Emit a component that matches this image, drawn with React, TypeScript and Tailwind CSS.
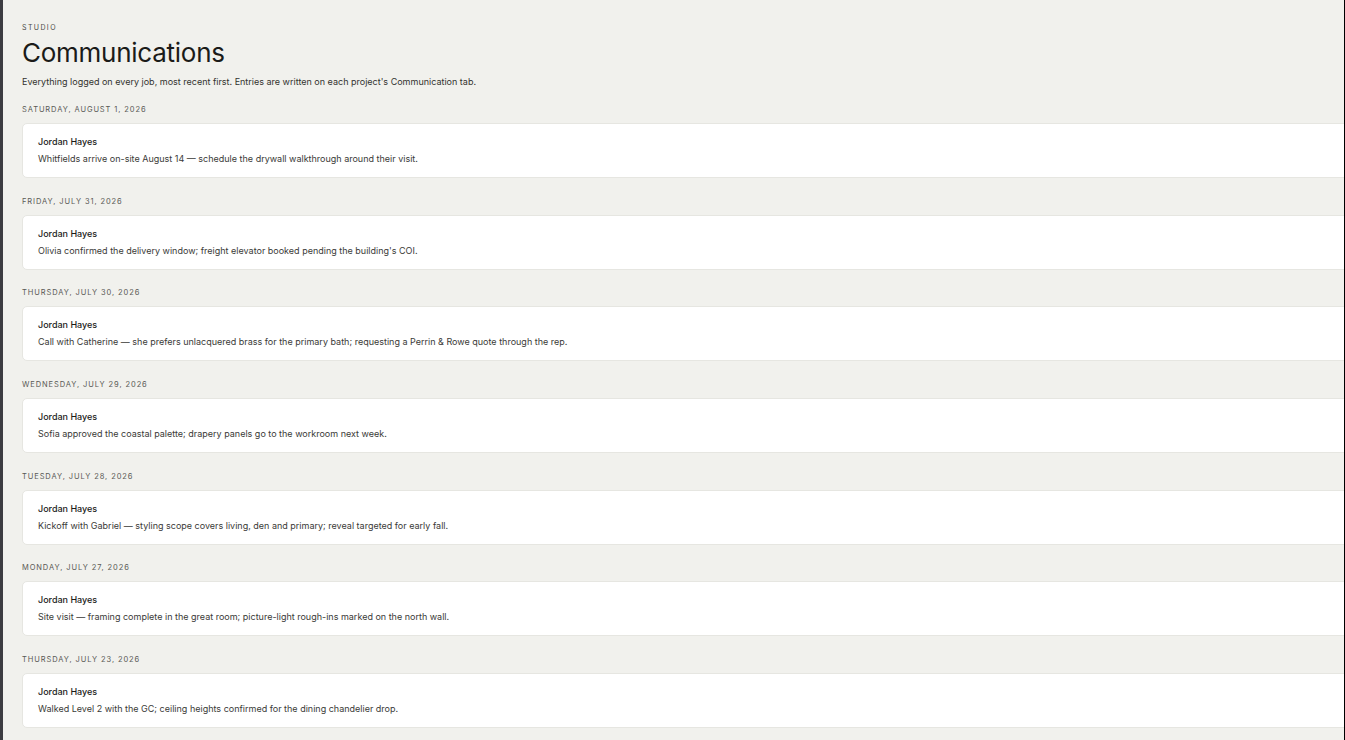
const entries = [
  {
    date: "Saturday, August 1, 2026",
    author: "Jordan Hayes",
    body: "Whitfields arrive on-site August 14 — schedule the drywall walkthrough around their visit.",
  },
  {
    date: "Friday, July 31, 2026",
    author: "Jordan Hayes",
    body: "Olivia confirmed the delivery window; freight elevator booked pending the building's COI.",
  },
  {
    date: "Thursday, July 30, 2026",
    author: "Jordan Hayes",
    body: "Call with Catherine — she prefers unlacquered brass for the primary bath; requesting a Perrin & Rowe quote through the rep.",
  },
  {
    date: "Wednesday, July 29, 2026",
    author: "Jordan Hayes",
    body: "Sofia approved the coastal palette; drapery panels go to the workroom next week.",
  },
  {
    date: "Tuesday, July 28, 2026",
    author: "Jordan Hayes",
    body: "Kickoff with Gabriel — styling scope covers living, den and primary; reveal targeted for early fall.",
  },
  {
    date: "Monday, July 27, 2026",
    author: "Jordan Hayes",
    body: "Site visit — framing complete in the great room; picture-light rough-ins marked on the north wall.",
  },
  {
    date: "Thursday, July 23, 2026",
    author: "Jordan Hayes",
    body: "Walked Level 2 with the GC; ceiling heights confirmed for the dining chandelier drop.",
  },
]

function LogEntry({ date, author, body }: { date: string; author: string; body: string }) {
  return (
    <section className="mb-[17.7px]">
      <h2 className="mb-[7px] h-[12px] text-[7.5px] leading-[12px] font-normal uppercase tracking-[0.12em] text-[#595955]">
        {date}
      </h2>
      <div className="-mr-6 h-[55px] rounded-[5px] border border-[#e6e6e1] bg-white px-[15px] pt-[11px]">
        <p className="text-[9px] leading-[13px] font-medium text-[#1c1c1a]">{author}</p>
        <p className="mt-[4px] text-[9px] leading-[13px] text-[#3a3a37]">{body}</p>
      </div>
    </section>
  )
}

export default function App() {
  return (
    <div
      className="flex h-[740px] w-full overflow-hidden bg-[#f1f1ed]"
      style={{ fontFamily: "Inter, 'Noto Sans', sans-serif" }}
    >
      <div className="w-[3px] shrink-0 bg-[#3c3c41]" />
      <main className="min-w-0 flex-1 overflow-hidden pl-[19px] pt-[23px]">
        <p className="text-[7px] leading-[10px] font-normal uppercase tracking-[0.2em] text-[#4a4a46]">
          Studio
        </p>
        <h1 className="mt-[3px] text-[26px] leading-[34px] font-normal tracking-[-0.01em] text-[#1b1b19]">
          Communications
        </h1>
        <p className="mt-[6px] text-[9px] leading-[12px] text-[#33332f]">
          Everything logged on every job, most recent first. Entries are written on each project's Communication tab.
        </p>
        <div className="mt-[16px]">
          {entries.map((e) => (
            <LogEntry key={e.date} {...e} />
          ))}
        </div>
      </main>
      <div className="w-px shrink-0 bg-black" />
    </div>
  )
}
